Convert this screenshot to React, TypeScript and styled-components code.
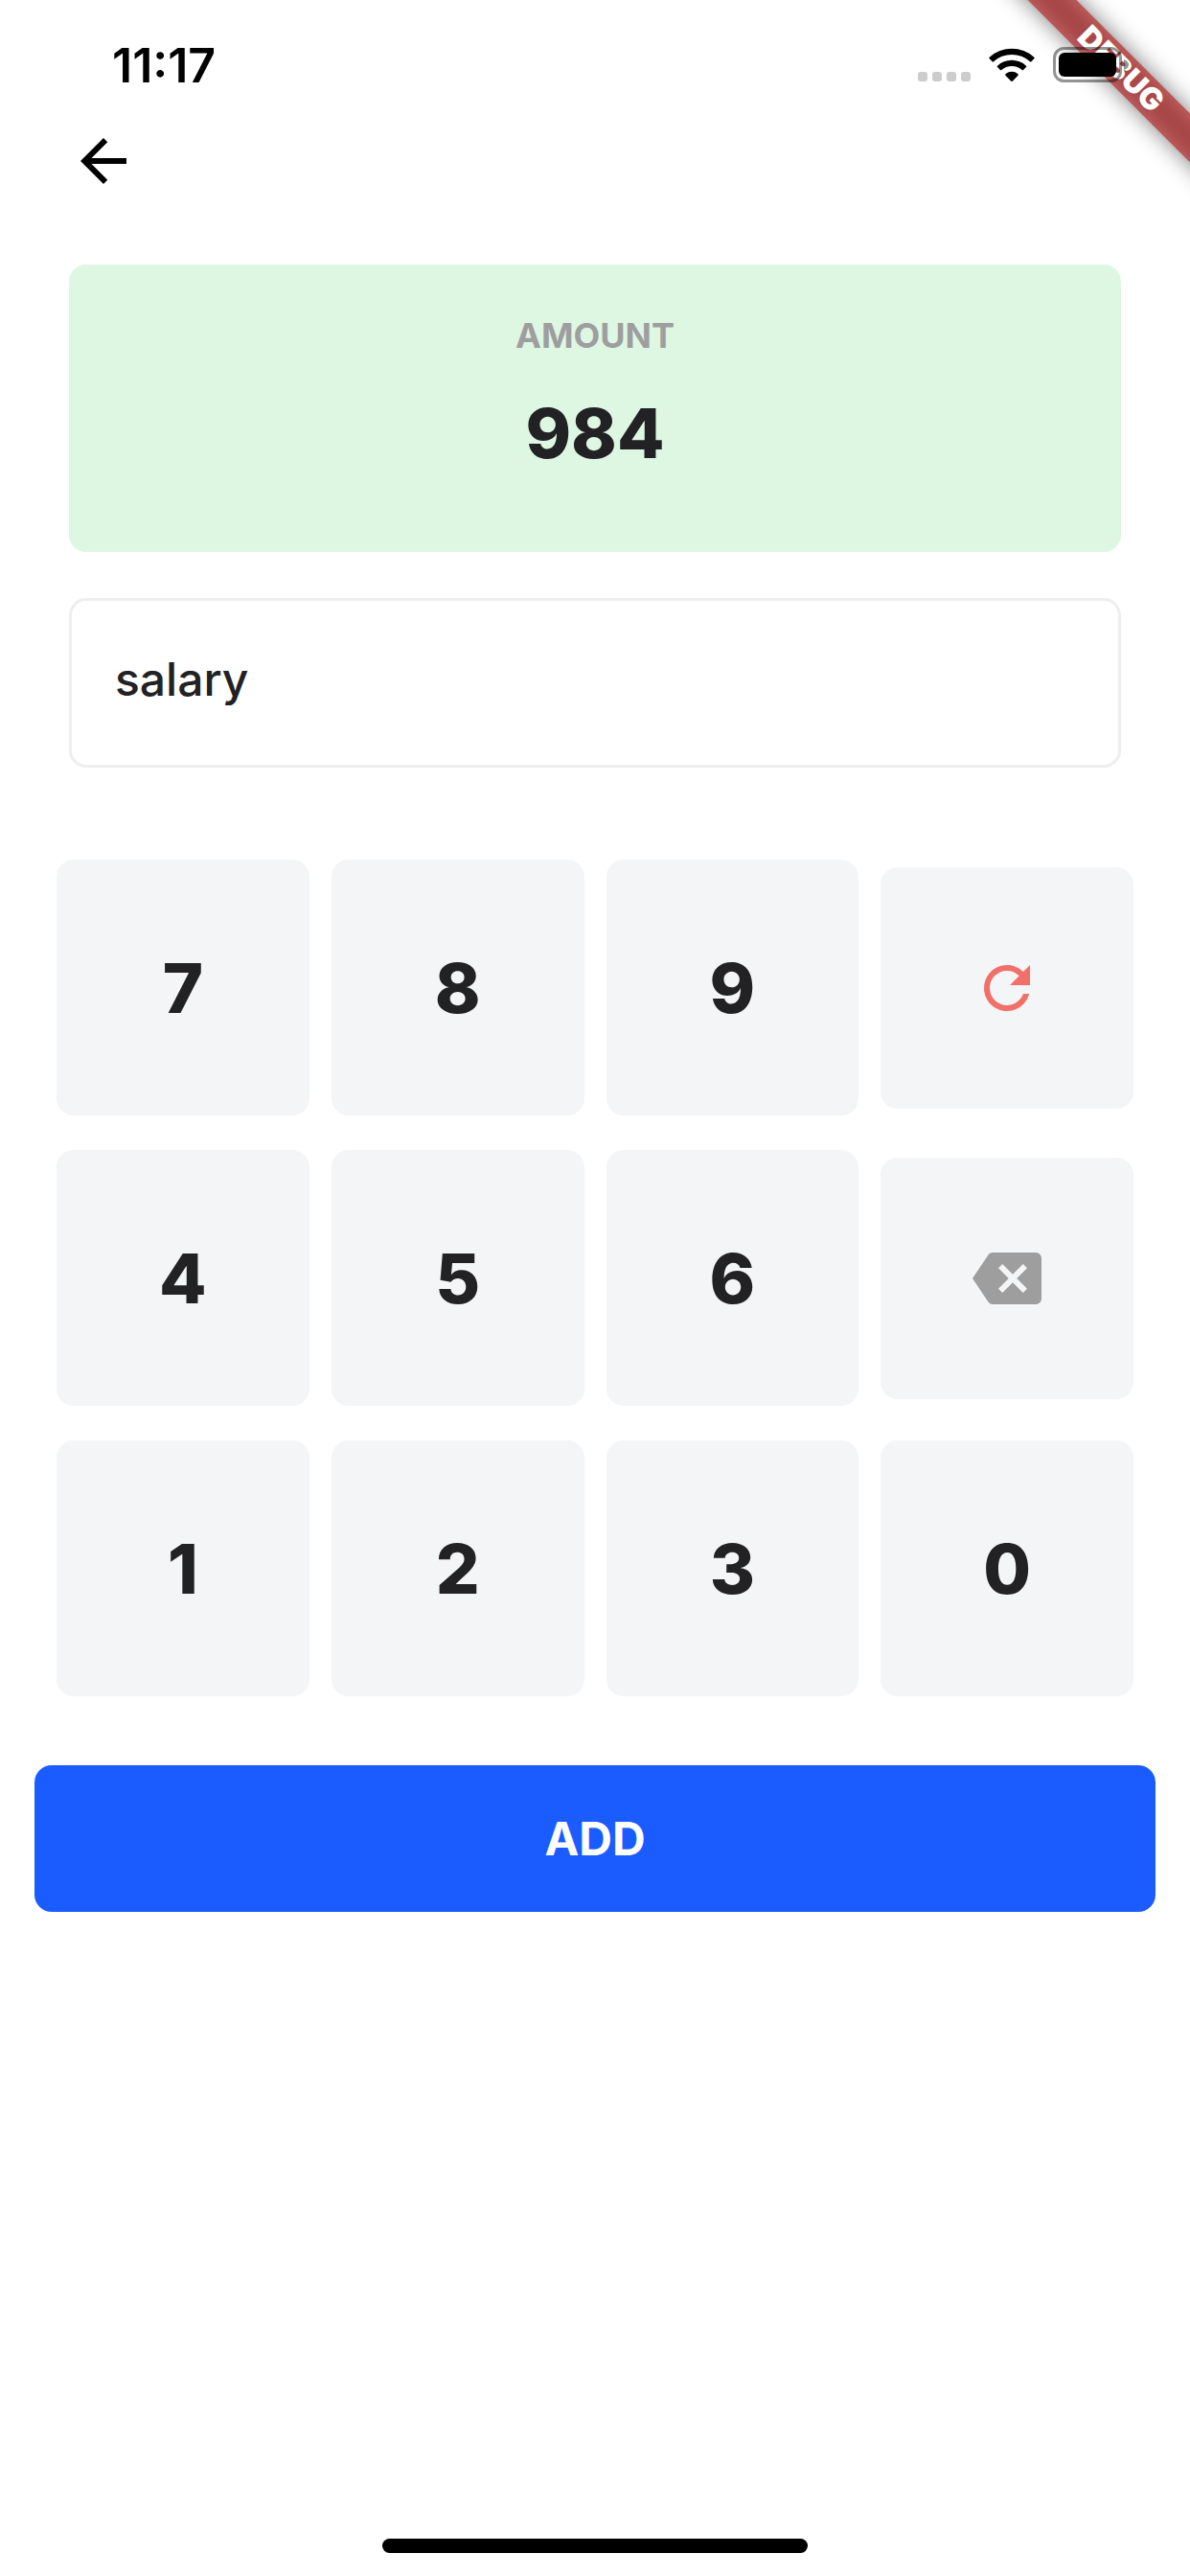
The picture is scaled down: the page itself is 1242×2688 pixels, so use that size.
import React, { useState } from 'react';
import styled, { createGlobalStyle } from 'styled-components';

const GlobalStyle = createGlobalStyle`
  *, *::before, *::after {
    box-sizing: border-box;
  }

  body {
    margin: 0;
    background: #ffffff;
    color: #222224;
    font-family: Inter, "Liberation Sans", sans-serif;
  }

  button, input {
    margin: 0;
    font: inherit;
    color: inherit;
  }

  button {
    padding: 0;
    border: 0;
    cursor: pointer;
  }
`;

const Screen = styled.div`
  position: relative;
  display: flex;
  flex-direction: column;
  min-height: 100vh;
`;

const StatusBar = styled.div`
  position: relative;
  z-index: 2;
  display: flex;
  justify-content: space-between;
  align-items: flex-start;
  height: 132px;
  padding: 48px 64px 0 117px;
  color: #000000;
`;

const Time = styled.time`
  font-size: 50px;
  line-height: 40px;
  font-weight: 600;
`;

const StatusIcons = styled.div`
  display: flex;
  align-items: flex-end;
  gap: 19px;

  svg {
    display: block;
  }
`;

const BannerCorner = styled.div`
  position: absolute;
  top: 0;
  right: 0;
  z-index: 1;
  width: 260px;
  height: 260px;
  overflow: hidden;
  pointer-events: none;
`;

const Banner = styled.div`
  position: absolute;
  top: 54px;
  right: -128px;
  width: 400px;
  height: 36px;
  transform: rotate(45deg);

  &::before {
    content: "";
    position: absolute;
    inset: 0;
    background: rgba(0, 0, 0, 0.5);
    filter: blur(12px);
  }
`;

const BannerLabel = styled.div`
  position: relative;
  background: rgba(183, 28, 28, 0.627);
  color: #ffffff;
  font-size: 32px;
  line-height: 36px;
  font-weight: 900;
  text-align: center;
`;

const Header = styled.header`
  display: flex;
  padding: 0 72px;
`;

const BackButton = styled.button`
  width: 72px;
  height: 72px;
  background: transparent;
  color: #000000;

  svg {
    display: block;
  }
`;

const Form = styled.form`
  display: flex;
  flex-direction: column;
  padding: 72px 36px;
`;

const Fields = styled.div`
  display: flex;
  flex-direction: column;
  gap: 48px;
  padding: 0 36px;
`;

const AmountCard = styled.div`
  display: flex;
  flex-direction: column;
  align-items: center;
  gap: 28px;
  min-height: 300px;
  padding: 48px;
  border-radius: 18px;
  background: #def7e3;
`;

const AmountLabel = styled.span`
  color: #9e9e9e;
  font-size: 36px;
  line-height: 52px;
  font-weight: 700;
`;

const AmountValue = styled.output`
  font-size: 72px;
  line-height: 96px;
  font-weight: 800;
`;

const NoteInput = styled.input`
  width: 100%;
  height: 177px;
  padding: 0 45px 8px;
  border: 3px solid #eeeeee;
  border-radius: 18px;
  outline: none;
  background: #ffffff;
  font-size: 48px;
  font-weight: 500;
`;

const Keypad = styled.div`
  display: grid;
  grid-template-columns: repeat(4, 1fr);
  grid-auto-rows: 267px;
  align-items: center;
  gap: 36px 23px;
  margin: 96px 0 72px;
  padding: 0 23px;
`;

const Key = styled.button<{ $tone?: string }>`
  display: flex;
  align-items: center;
  justify-content: center;
  height: ${({ $tone }) => ($tone ? '252px' : '267px')};
  border-radius: 18px;
  background: #f4f5f7;
  color: ${({ $tone }) => $tone ?? '#222224'};
  font-size: 72px;
  font-weight: 800;
`;

const AddButton = styled.button`
  height: 153px;
  border-radius: 18px;
  background: #1a5cff;
  color: #ffffff;
  font-size: 48px;
  font-weight: 700;
`;

const HomeIndicator = styled.div`
  align-self: center;
  width: 444px;
  height: 15px;
  margin: auto 0 24px;
  border-radius: 8px;
  background: #000000;
`;

const ICONS = {
  back: 'M20 11H7.83l5.59-5.59L12 4l-8 8 8 8 1.41-1.41L7.83 13H20v-2z',
  refresh:
    'M17.65 6.35C16.2 4.9 14.21 4 12 4c-4.42 0-7.99 3.58-7.99 8s3.57 8 7.99 8c3.73 0 6.84-2.55 7.73-6h-2.08c-.82 2.33-3.04 4-5.65 4-3.31 0-6-2.69-6-6s2.69-6 6-6c1.66 0 3.14.69 4.22 1.78L13 11h7V4l-2.35 2.35z',
  backspace:
    'M22 3H7c-.69 0-1.23.35-1.59.88L0 12l5.41 8.11c.36.53.9.89 1.59.89h15c1.1 0 2-.9 2-2V5c0-1.1-.9-2-2-2zm-3 12.59L17.59 17 14 13.41 10.41 17 9 15.59 12.59 12 9 8.41 10.41 7 14 10.59 17.59 7 19 8.41 15.41 12 19 15.59z',
};

const Icon = ({ name }: { name: keyof typeof ICONS }) => (
  <svg width="72" height="72" viewBox="0 0 24 24" fill="currentColor" aria-hidden="true">
    <path d={ICONS[name]} />
  </svg>
);

const SignalIcon = () => (
  <svg width="55" height="11" viewBox="0 0 55 11" fill="#cccccc" aria-hidden="true">
    {[0, 15, 30, 45].map((x) => (
      <rect key={x} x={x} y="0" width="10" height="10" rx="3" />
    ))}
  </svg>
);

const WifiIcon = () => (
  <svg width="48" height="37" viewBox="0 0 144 111" aria-hidden="true">
    <path d="M2 32A104 104 0 0 1 142 32Q144 34 142 37L133 46Q131 48 129 46A84 84 0 0 0 15 46Q13 48 11 46L2 37Q0 34 2 32Z" />
    <path d="M27 59A66 66 0 0 1 117 59Q119 61 117 63L108 72Q106 74 104 72A48 48 0 0 0 40 72Q38 74 36 72L27 63Q25 61 27 59Z" />
    <path d="M53 84A30 30 0 0 1 91 84Q94 87 91 90L74 107Q72 109 70 107L53 90Q50 87 53 84Z" />
  </svg>
);

const BatteryIcon = () => (
  <svg width="79" height="38" viewBox="0 0 79 38" aria-hidden="true">
    <rect x="1.5" y="2.5" width="69" height="34" rx="10" fill="none" stroke="#000" strokeOpacity=".42" strokeWidth="3" />
    <rect x="6" y="7" width="60" height="25" rx="6" />
    <path d="M74 14Q79 16 79 19.500T74 25Z" fillOpacity=".42" />
  </svg>
);

const KEYS = ['7', '8', '9', 'refresh', '4', '5', '6', 'backspace', '1', '2', '3', '0'];

export default function App() {
  const [amount, setAmount] = useState('984');
  const [note, setNote] = useState('salary');

  return (
    <>
      <GlobalStyle />
      <Screen>
        <StatusBar>
          <Time>11:17</Time>
          <StatusIcons>
            <SignalIcon />
            <WifiIcon />
            <BatteryIcon />
          </StatusIcons>
        </StatusBar>
        <BannerCorner>
          <Banner>
            <BannerLabel>DEBUG</BannerLabel>
          </Banner>
        </BannerCorner>
        <Header>
          <BackButton type="button" aria-label="Back">
            <Icon name="back" />
          </BackButton>
        </Header>
        <Form onSubmit={(event) => event.preventDefault()}>
          <Fields>
            <AmountCard>
              <AmountLabel id="amount-label">AMOUNT</AmountLabel>
              <AmountValue aria-labelledby="amount-label">{amount}</AmountValue>
            </AmountCard>
            <NoteInput
              type="text"
              aria-label="Note"
              value={note}
              onChange={(event) => setNote(event.target.value)}
            />
          </Fields>
          <Keypad>
            {KEYS.map((key) => {
              if (key === 'refresh') {
                return (
                  <Key key={key} type="button" $tone="#f2706a" aria-label="Clear" onClick={() => setAmount('0')}>
                    <Icon name="refresh" />
                  </Key>
                );
              }
              if (key === 'backspace') {
                return (
                  <Key
                    key={key}
                    type="button"
                    $tone="#9e9e9e"
                    aria-label="Delete"
                    onClick={() => setAmount((value) => value.slice(0, -1) || '0')}
                  >
                    <Icon name="backspace" />
                  </Key>
                );
              }
              return (
                <Key
                  key={key}
                  type="button"
                  onClick={() => setAmount((value) => (value === '0' ? key : value + key))}
                >
                  {key}
                </Key>
              );
            })}
          </Keypad>
          <AddButton type="submit">ADD</AddButton>
        </Form>
        <HomeIndicator />
      </Screen>
    </>
  );
}
